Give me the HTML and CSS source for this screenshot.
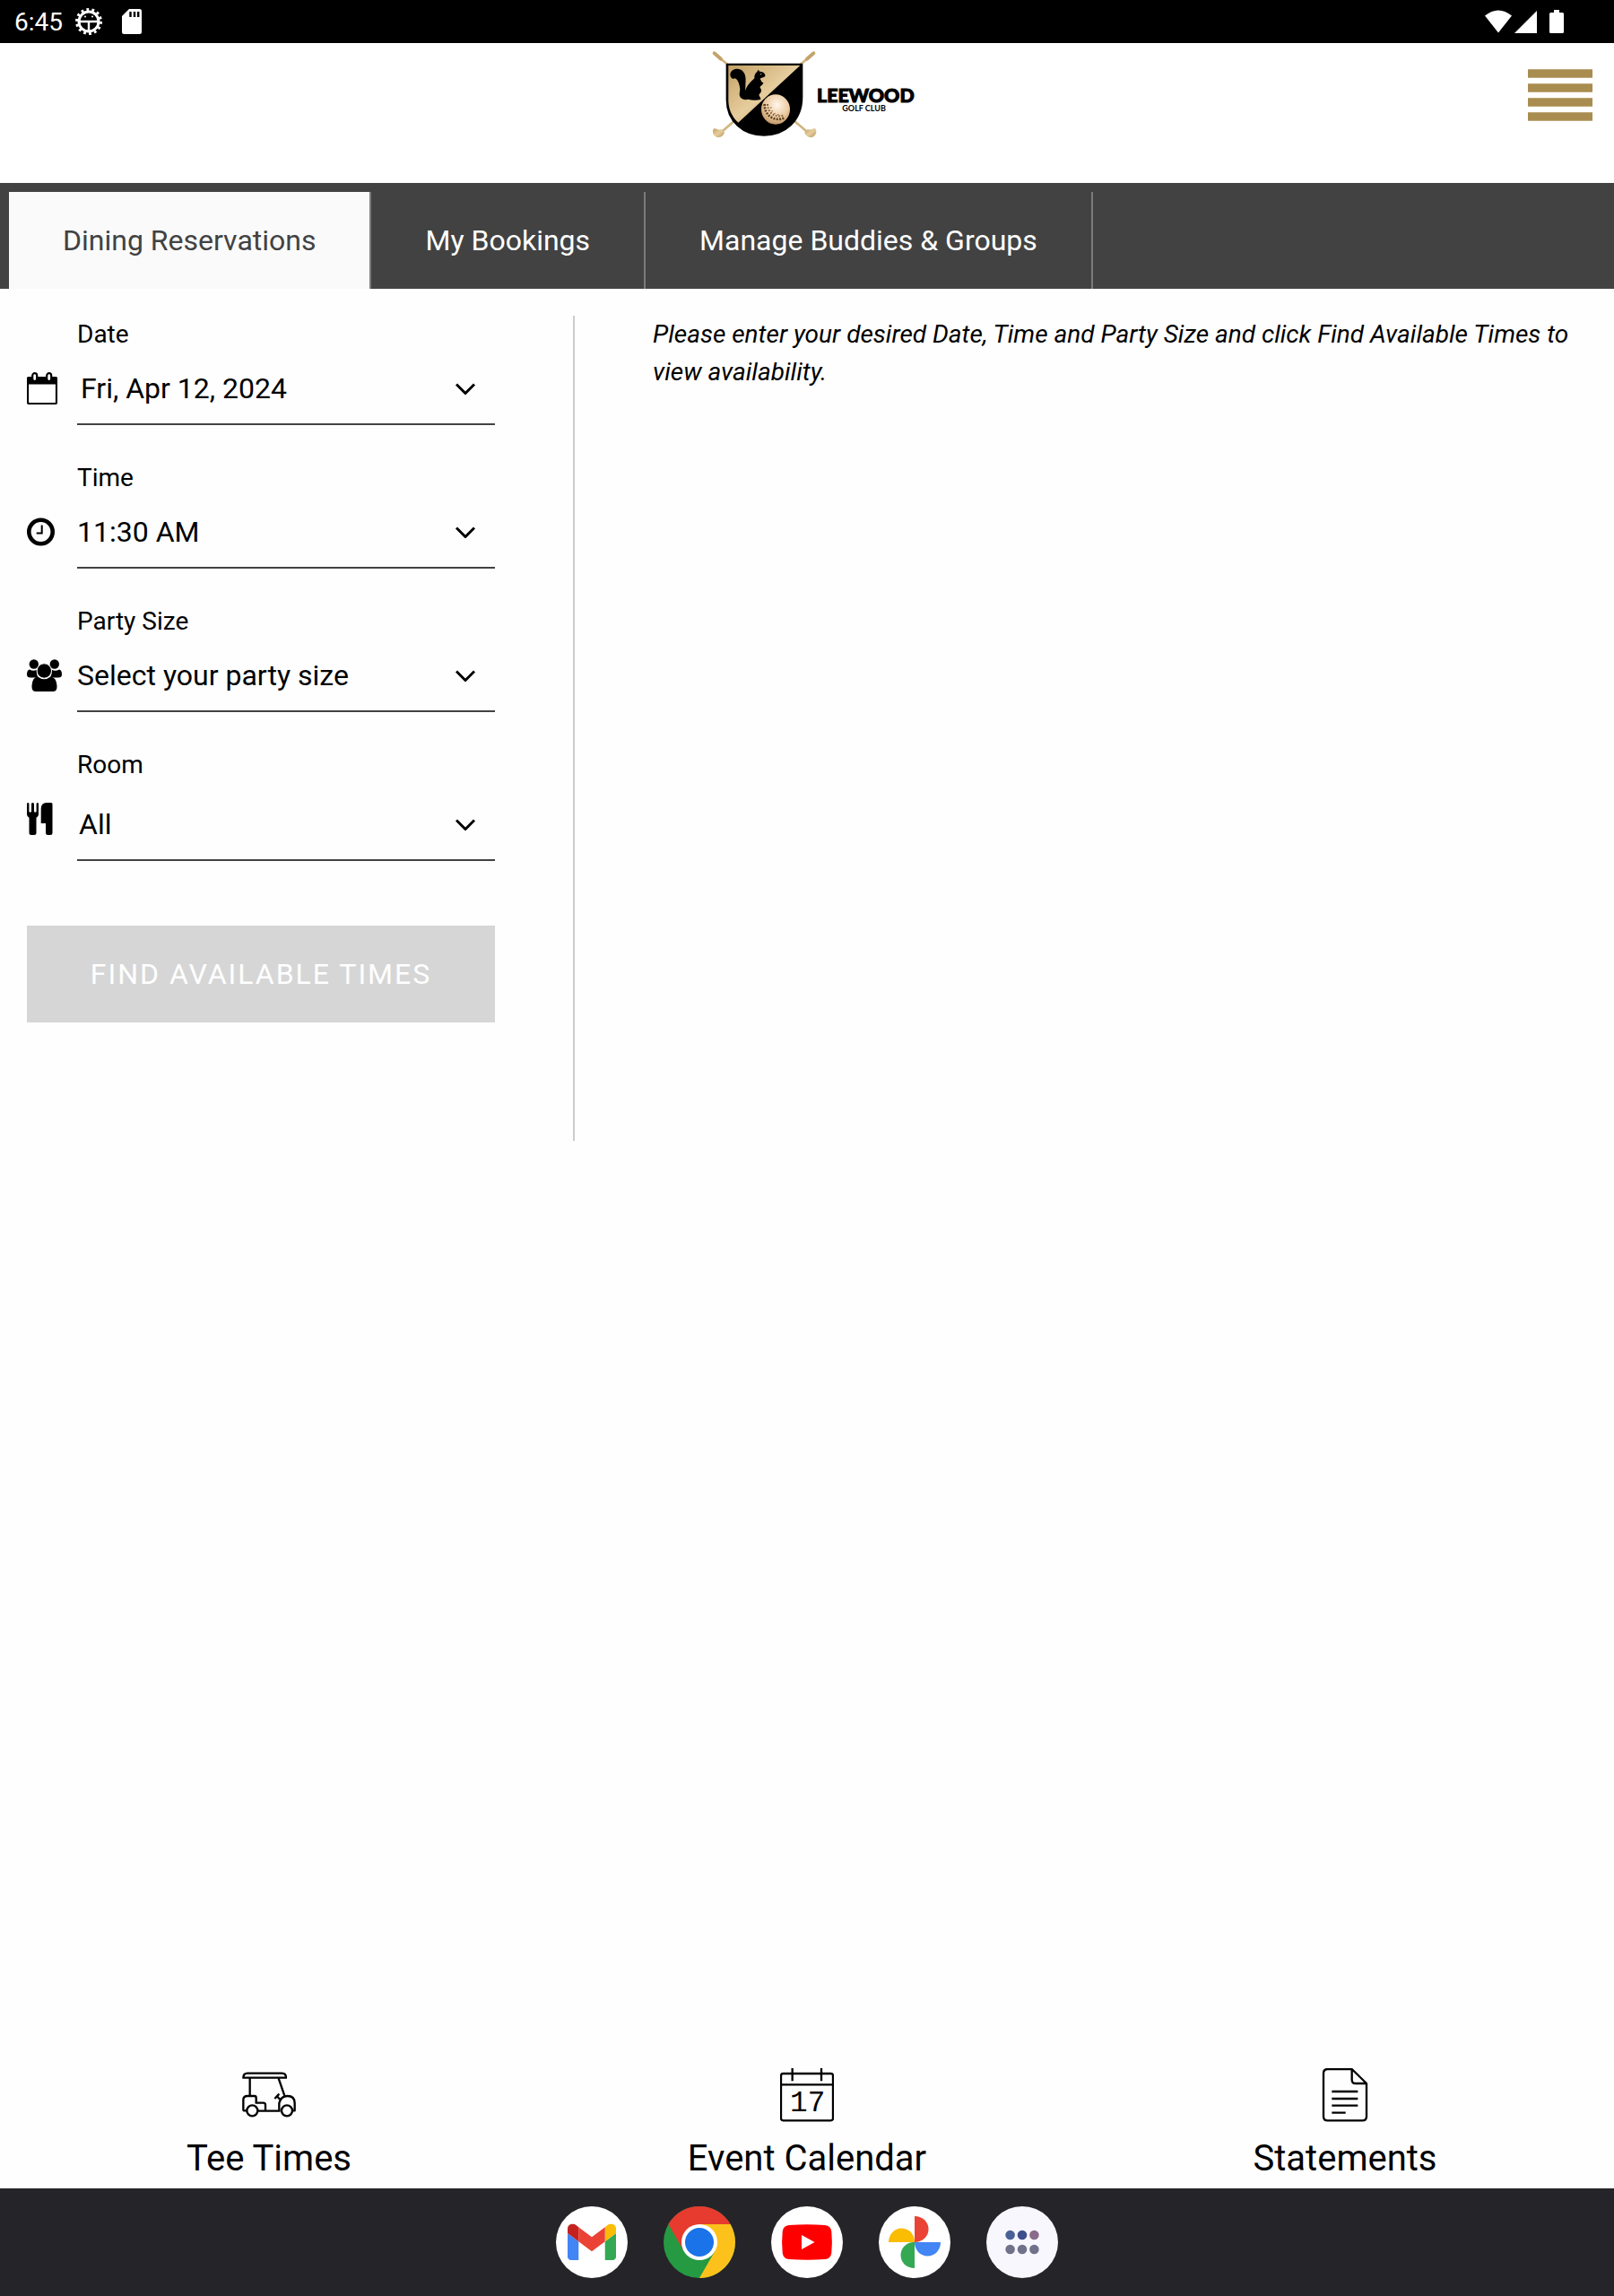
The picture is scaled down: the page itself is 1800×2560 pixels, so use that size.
FILE: index.html
```
<!DOCTYPE html>
<html lang="en">
<head>
  <meta charset="UTF-8">
  <meta name="viewport" content="width=device-width, initial-scale=1.0">
  <title>Leewood Golf Club | Dining Reservations</title>
  <link rel="stylesheet" href="styles.css">
</head>
<body>
  <div class="status-bar">
    <span class="clock">6:45</span>
    <svg class="status-gear" width="30" height="30" viewBox="0 0 30 30">
      <circle cx="15" cy="15" r="11" fill="none" stroke="#fff" stroke-width="3"/>
      <circle cx="15" cy="15" r="13.5" fill="none" stroke="#fff" stroke-width="3" stroke-dasharray="2.8 3.26"/>
      <path d="M5 15h20M15 15v10" stroke="#fff" stroke-width="2.4"/>
      <circle cx="11" cy="9.5" r="1" fill="#fff"/>
      <circle cx="19" cy="9.5" r="1" fill="#fff"/>
    </svg>
    <svg class="status-card" width="22" height="28" viewBox="0 0 22 28">
      <path d="M8 0h11.500a2.500 2.500 0 0 1 2.500 2.500v23a2.500 2.500 0 0 1-2.500 2.500h-17A2.500 2.500 0 0 1 0 25.500V8z" fill="#fff"/>
      <path d="M9.500 3v6M14 3v6M18.200 3v6" stroke="#000" stroke-width="2.400"/>
    </svg>
    <div class="status-right">
      <svg width="30" height="26" viewBox="0 0 30 26"><path d="M0 6.500Q15-5.500 30 6.500L15 25.500z" fill="#fff"/></svg>
      <svg width="25" height="26" viewBox="0 0 25 26"><path d="M25 1v25H0z" fill="#fff"/></svg>
      <svg class="battery" width="16" height="26" viewBox="0 0 16 26"><path d="M5 0h6v3h3.500A1.500 1.500 0 0 1 16 4.500v20a1.500 1.500 0 0 1-1.500 1.500h-13A1.500 1.500 0 0 1 0 24.500v-20A1.500 1.500 0 0 1 1.500 3H5z" fill="#fff"/></svg>
    </div>
  </div>

  <header class="header">
    <a href="#" class="logo" aria-label="Leewood Golf Club">
      <svg width="240" height="100" viewBox="0 45 720 300">
        <defs>
          <linearGradient id="gold" x1="0" y1="0" x2="1" y2="1">
            <stop offset="0" stop-color="#c3a165"/>
            <stop offset=".5" stop-color="#e6cd9d"/>
            <stop offset="1" stop-color="#b8955a"/>
          </linearGradient>
          <radialGradient id="ball" cx=".55" cy=".35" r=".7">
            <stop offset="0" stop-color="#fff6ea"/>
            <stop offset=".6" stop-color="#ecc9a0"/>
            <stop offset="1" stop-color="#b98d5c"/>
          </radialGradient>
        </defs>
        <!-- crossed clubs -->
        <path d="M52 60L365 325M380 60L70 325" stroke="#d2b67f" stroke-width="8"/>
        <path d="M50 58l22 19M382 58l-22 19" stroke="#c4a46c" stroke-width="12" stroke-linecap="round"/>
        <path d="M84 322c-2 14-18 22-30 15-10-7-12-21-5-27 9-3 12 8 24 2z" fill="url(#gold)"/>
        <path d="M352 322c2 14 18 22 30 15 10-7 12-21 5-27-9-3-12 8-24 2z" fill="url(#gold)"/>
        <!-- shield -->
        <path d="M92 95H343V205C343 285 285 332 216 332S92 285 92 215z" fill="#000" stroke="#000" stroke-width="6" stroke-linejoin="round"/>
        <path d="M97 99H337L130 290C106 268 97 240 97 215z" fill="url(#gold)"/>
        <!-- squirrel -->
        <path d="M136 178C134 160 128 144 118 142 110 148 100 136 104 124 110 108 134 106 146 119 160 134 153 158 154 184 158 166 172 154 184 142 183 132 187 124 193 121L196 113 202 119C214 119 222 128 220 135 215 140 206 139 203 144 208 151 207 155 214 157 212 166 203 166 203 173 210 181 207 190 200 195 198 202 206 205 205 213 191 216 176 216 163 212 148 217 134 208 134 195z" fill="#000"/>
        <circle cx="206" cy="128" r="2" fill="#e6cd9d"/>
        <!-- golf ball -->
        <ellipse cx="255" cy="246" rx="48" ry="50" fill="url(#ball)"/>
        <path d="M218 228C217 266 250 289 286 274" fill="none" stroke="#5c4022" stroke-width="8" stroke-dasharray="6 4"/>
        <path d="M228 228C229 256 250 275 280 266" fill="none" stroke="#7c5c38" stroke-width="6" stroke-dasharray="5 5"/>
        <path d="M239 238C242 256 252 264 268 263" fill="none" stroke="#8d6c45" stroke-width="4" stroke-dasharray="4 8"/>
        <text class="logo-name" x="393" y="221">LEEWOOD</text>
        <text class="logo-sub" x="478" y="251">GOLF CLUB</text>
      </svg>
    </a>
    <button class="menu-button" aria-label="Menu">
      <svg width="72" height="60" viewBox="0 0 72 60"><path d="M0 7h72M0 23h72M0 39h72M0 55h72" stroke="#a98c4f" stroke-width="9.600"/></svg>
    </button>
  </header>

  <nav class="tabs">
    <a href="#" class="tab active">Dining Reservations</a>
    <a href="#" class="tab">My Bookings</a>
    <a href="#" class="tab">Manage Buddies &amp; Groups</a>
  </nav>

  <main class="content">
    <form class="search-form">
      <div class="field">
        <label for="date">Date</label>
        <svg width="34" height="36" viewBox="0 0 34 36">
          <rect x="1" y="6" width="32" height="29" rx="1.500" fill="#fff" stroke="#000" stroke-width="2.200"/>
          <path d="M0 7Q0 5 2 5H32Q34 5 34 7V13.500H0z"/>
          <rect x="6.200" y="1.200" width="5" height="8.800" rx="2.500" fill="#fff" stroke="#000" stroke-width="2.200"/>
          <rect x="22.200" y="1.200" width="5" height="8.800" rx="2.500" fill="#fff" stroke="#000" stroke-width="2.200"/>
        </svg>
        <div class="control indent">
          <input type="text" id="date" name="date" value="Fri, Apr 12, 2024" readonly>
          <svg class="arrow" width="22" height="14" viewBox="0 0 22 14"><path d="M1 2.500l10 10 10-10"/></svg>
        </div>
      </div>

      <div class="field">
        <label for="time">Time</label>
        <svg width="31" height="36" viewBox="0 0 31 36">
          <circle cx="15.500" cy="18" r="13.200" fill="none" stroke="#000" stroke-width="4.600"/>
          <path d="M16.700 10.500v9h-6" fill="none" stroke="#000" stroke-width="2"/>
        </svg>
        <div class="control">
          <select id="time" name="time">
            <option>11:30 AM</option>
          </select>
          <svg class="arrow" width="22" height="14" viewBox="0 0 22 14"><path d="M1 2.500l10 10 10-10"/></svg>
        </div>
      </div>

      <div class="field">
        <label for="party">Party Size</label>
        <svg width="39" height="36" viewBox="0 0 39 36">
          <circle cx="7.800" cy="5.500" r="5.200"/>
          <circle cx="30.800" cy="5.500" r="5.200"/>
          <path d="M3 11.500Q7 14 11.500 11.500 10 17 13 20.500H4Q0 20.500 0 17 0 12 3 11.500zM36 11.500Q32 14 27 11.500 28.500 17 25.500 20.500H35Q39 20.500 39 17 39 12 36 11.500z"/>
          <circle cx="19.300" cy="13" r="8.200" stroke="#fff" stroke-width="1"/>
          <path d="M12 19.500Q19.300 25 26.500 19.500 33.500 20.500 33.500 31 33.500 36 29 36H10Q5.500 36 5.500 31 5.500 20.500 12 19.500z"/>
        </svg>
        <div class="control">
          <select id="party" name="party">
            <option>Select your party size</option>
          </select>
          <svg class="arrow" width="22" height="14" viewBox="0 0 22 14"><path d="M1 2.500l10 10 10-10"/></svg>
        </div>
      </div>

      <div class="field">
        <label for="room">Room</label>
        <svg width="29" height="36" viewBox="0 0 29 36">
          <path d="M0 1Q1.200-.8 2.400 1V10Q3.700 11.500 5 10V1Q6.500-.8 8 1V10Q9.300 11.500 10.600 10V1Q11.800-.8 13 1V13Q13 15.500 10.500 16.800V33.500Q10.500 36 8 36H5Q2.500 36 2.500 33.500V16.800Q0 15.500 0 13z"/>
          <path d="M22 0H27Q28.500 0 28.500 1.500V33.500Q28.500 36 26 36H23.500Q21 36 21 33.500V23H15.700V7Q15.700 0 22 0z"/>
        </svg>
        <div class="control room">
          <select id="room" name="room">
            <option>All</option>
          </select>
          <svg class="arrow" width="22" height="14" viewBox="0 0 22 14"><path d="M1 2.500l10 10 10-10"/></svg>
        </div>
      </div>

      <button type="submit" class="find-button" disabled>FIND AVAILABLE TIMES</button>
    </form>

    <section class="results">
      <p>Please enter your desired Date, Time and Party Size and click Find Available Times to view availability.</p>
    </section>
  </main>

  <nav class="bottom-nav">
    <a href="#">
      <svg class="line-icon" width="60" height="60" viewBox="90 48 180 180">
        <path d="M94 80Q94 65 108 65H224Q237 65 237 80zM116 82V140M212 82L232 140M105 190H96Q94 190 94 186V154Q94 141 108 141H131Q137 141 137 147V164H161Q168 164 168 171V191M143 191H218M214 190V165Q220 141 242 141 266 141 266 165V190H260M199 150L214 134M207 142L219 155"/>
        <circle cx="124" cy="190" r="18"/>
        <circle cx="240" cy="190" r="18"/>
      </svg>
      Tee Times
    </a>
    <a href="#">
      <svg class="line-icon" width="60" height="60" viewBox="60 48 180 180">
        <rect x="63" y="66" width="174" height="157" rx="7"/>
        <path d="M63 103H237M101 48V91M198 48V91"/>
        <text class="day" x="152" y="192">17</text>
      </svg>
      Event Calendar
    </a>
    <a href="#">
      <svg class="line-icon" width="60" height="60" viewBox="90 48 180 180">
        <path d="M122 51H203L252 99V209Q252 223 238 223H122Q108 223 108 209V65Q108 51 122 51zM203 51V86Q203 99 216 99H252M136 126H223M136 150H223M136 173H223M136 197H182"/>
      </svg>
      Statements
    </a>
  </nav>

  <footer class="dock">
    <a href="#" aria-label="Gmail">
      <svg width="80" height="80" viewBox="0 0 80 80">
        <circle cx="40" cy="40" r="40" fill="#fff"/>
        <svg x="13" y="19.500" width="54" height="40.500" viewBox="52 42 88 66">
          <path fill="#4285f4" d="M58 108h14V74L52 59v43c0 3.320 2.690 6 6 6"/>
          <path fill="#34a853" d="M120 108h14c3.320 0 6-2.690 6-6V59l-20 15"/>
          <path fill="#fbbc04" d="M120 48v26l20-15v-8c0-7.420-8.470-11.650-14.400-7.200"/>
          <path fill="#ea4335" d="M72 74V48l24 18 24-18v26L96 92"/>
          <path fill="#c5221f" d="M52 51v8l20 15V48l-5.600-4.200c-5.940-4.450-14.400-.220-14.400 7.200"/>
        </svg>
      </svg>
    </a>
    <a href="#" aria-label="Chrome">
      <svg width="80" height="80" viewBox="0 0 80 80">
        <circle cx="40" cy="40" r="40" fill="#259a42"/>
        <path d="M40 20H74.640A40 40 0 0 1 40 80L57.320 50z" fill="#fcc21b"/>
        <path d="M5.360 20A40 40 0 0 1 74.640 20H40L22.680 50z" fill="#e63b2e"/>
        <circle cx="40" cy="40" r="20" fill="#fff"/>
        <circle cx="40" cy="40" r="16" fill="#1a73e8"/>
      </svg>
    </a>
    <a href="#" aria-label="YouTube">
      <svg width="80" height="80" viewBox="0 0 80 80">
        <circle cx="40" cy="40" r="40" fill="#fff"/>
        <path d="M20 21Q40 19.500 60 21 66.500 21.500 67.300 28 68.500 40 67.300 52 66.500 58.500 60 59 40 60.500 20 59 13.500 58.500 12.700 52 11.500 40 12.700 28 13.500 21.500 20 21z" fill="#f00"/>
        <path d="M34 32v16l14.500-8z" fill="#fff"/>
      </svg>
    </a>
    <a href="#" aria-label="Photos">
      <svg width="80" height="80" viewBox="0 0 80 80">
        <circle cx="40" cy="40" r="40" fill="#fff"/>
        <path d="M40 11c9 0 15.500 6.500 15.500 14.500S49 40 40 40z" fill="#ea4335"/>
        <path d="M69 40c0 9-6.500 15.500-14.500 15.500S40 49 40 40z" fill="#4285f4"/>
        <path d="M40 69c-9 0-15.500-6.500-15.500-14.500S31 40 40 40z" fill="#34a853"/>
        <path d="M11 40c0-9 6.500-15.500 14.500-15.500S40 31 40 40z" fill="#fbbc04"/>
      </svg>
    </a>
    <a href="#" aria-label="All apps">
      <svg width="80" height="80" viewBox="0 0 80 80">
        <circle cx="40" cy="40" r="40" fill="#f8f7fd"/>
        <circle cx="26.600" cy="32" r="5.300" fill="#4a6096"/>
        <circle cx="40" cy="32" r="5.300" fill="#3f4f8b"/>
        <circle cx="53.400" cy="32" r="5.300" fill="#8b6a8b"/>
        <circle cx="26.600" cy="48" r="5.300" fill="#6f728a"/>
        <circle cx="40" cy="48" r="5.300" fill="#6f728a"/>
        <circle cx="53.400" cy="48" r="5.300" fill="#6f728a"/>
      </svg>
    </a>
  </footer>
</body>
</html>
```
FILE: styles.css
```
* {
  box-sizing: border-box;
}
body {
  font-family: Roboto, Arial, sans-serif;
  background-color: #fefefe;
  color: #000;
  margin: 0;
  min-height: 100vh;
  display: flex;
  flex-direction: column;
}
svg {
  display: block;
}
a {
  color: inherit;
  text-decoration: none;
}

/* Status bar */
.status-bar {
  display: flex;
  align-items: center;
  height: 48px;
  padding: 0 56px 0 16px;
  background-color: #000;
  color: #fff;
  font-size: 28px;
}
.status-gear {
  margin-left: 14px;
}
.status-card {
  margin-left: 22px;
}
.status-right {
  display: flex;
  gap: 3px;
  margin-left: auto;
}
.battery {
  margin-left: 11px;
}

/* Header */
.header {
  display: grid;
  grid-template-columns: 1fr auto 1fr;
  align-items: center;
  padding: 7px 24px 49px;
  background-color: #fff;
}
.logo {
  grid-column: 2;
}
.logo-name {
  font-family: Lato, sans-serif;
  font-size: 64px;
  font-weight: 900;
  stroke: #000;
  stroke-width: 3;
}
.logo-sub {
  font-family: Lato, sans-serif;
  font-size: 27px;
  font-weight: 700;
}
.menu-button {
  justify-self: end;
  padding: 0;
  border: none;
  background: none;
  cursor: pointer;
}

/* Tabs */
.tabs {
  display: flex;
  padding: 10px 10px 0;
  background-color: #424242;
}
.tab {
  padding: 0 60px;
  border-right: 2px solid #7b7b7b;
  color: #fff;
  font-size: 32px;
  line-height: 108px;
}
.tab.active {
  background-color: #fafafa;
  color: #424242;
}

/* Reservation form */
.content {
  display: flex;
  padding: 30px;
}
.search-form {
  width: 35%;
  padding: 0 87px 132px 0;
}
.field {
  display: grid;
  grid-template-columns: 56px 1fr;
  margin-bottom: 38px;
}
.field label {
  grid-column: 2;
  font-size: 28px;
  line-height: 42px;
}
.field > svg {
  margin-top: 21px;
}
.control {
  display: flex;
  align-items: center;
  height: 80px;
  border-bottom: 2px solid #424242;
}
.control.indent {
  padding-left: 4px;
}
.control.room {
  height: 86px;
  padding: 6px 0 0 2px;
}
.control input,
.control select {
  flex: 1;
  min-width: 0;
  height: 100%;
  padding: 0;
  border: none;
  background: none;
  color: #000;
  font-family: inherit;
  font-size: 32px;
  appearance: none;
}
.arrow {
  margin-right: 22px;
  fill: none;
  stroke: #000;
  stroke-width: 3;
}
.find-button {
  width: 100%;
  height: 108px;
  margin-top: 34px;
  border: none;
  background-color: #d6d6d6;
  color: #fff;
  font-family: inherit;
  font-size: 32px;
  letter-spacing: 2px;
}
.results {
  flex: 1;
  padding-left: 87px;
  border-left: 2px solid #ccc;
}
.results p {
  margin: 0;
  font-size: 28px;
  font-style: italic;
  line-height: 42px;
}

/* Bottom navigation */
.bottom-nav {
  display: grid;
  grid-template-columns: repeat(3, 1fr);
  margin-top: auto;
  padding-bottom: 8px;
}
.bottom-nav a {
  display: flex;
  flex-direction: column;
  align-items: center;
  gap: 16px;
  font-size: 40px;
  line-height: 50px;
}
.line-icon {
  fill: none;
  stroke: #000;
  stroke-width: 7;
  stroke-linejoin: round;
}
.day {
  fill: #000;
  stroke: none;
  font-family: "Liberation Mono", monospace;
  font-size: 98px;
  text-anchor: middle;
}

/* App dock */
.dock {
  display: flex;
  justify-content: center;
  gap: 40px;
  padding: 20px;
  background-color: #252429;
}
```
